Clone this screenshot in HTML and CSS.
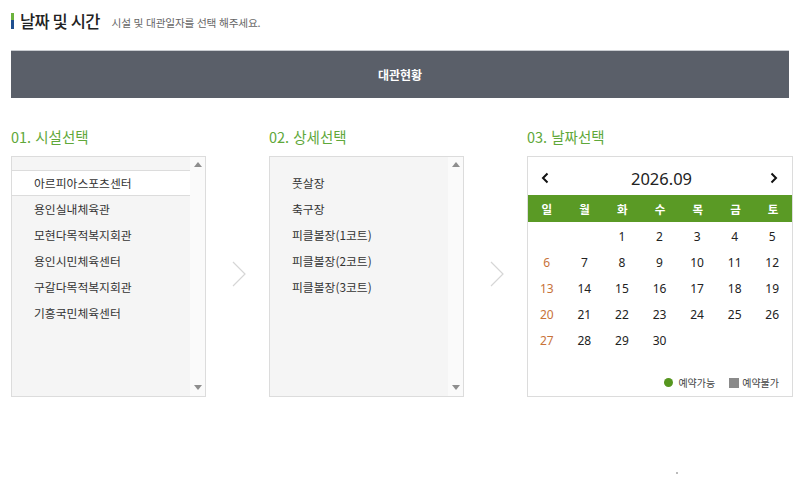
FILE: index.html
```html
<!DOCTYPE html>
<html lang="ko">
<head>
<meta charset="utf-8">
<title>날짜 및 시간</title>
<link rel="stylesheet" href="styles.css">
</head>
<body>
<div class="page">
  <div class="head">
    <span class="marker"></span>
    <h1 class="head-title">날짜 및 시간</h1>
    <span class="head-sub">시설 및 대관일자를 선택 해주세요.</span>
  </div>
  <div class="banner">대관현황</div>

  <div class="columns">
    <div class="col col-list">
      <h2 class="step">01. 시설선택</h2>
      <div class="listbox">
        <ul class="items">
          <li class="item selected">아르피아스포츠센터</li>
          <li class="item">용인실내체육관</li>
          <li class="item">모현다목적복지회관</li>
          <li class="item">용인시민체육센터</li>
          <li class="item">구갈다목적복지회관</li>
          <li class="item">기흥국민체육센터</li>
        </ul>
        <div class="scroll"><span class="tri up"></span><span class="tri down"></span></div>
      </div>
    </div>

    <div class="sep"><svg width="14" height="26" viewBox="0 0 14 26"><polyline points="1,1 13,13 1,25" fill="none" stroke="#d6d6d6" stroke-width="1.2"/></svg></div>

    <div class="col col-list">
      <h2 class="step">02. 상세선택</h2>
      <div class="listbox">
        <ul class="items">
          <li class="item">풋살장</li>
          <li class="item">축구장</li>
          <li class="item">피클볼장(1코트)</li>
          <li class="item">피클볼장(2코트)</li>
          <li class="item">피클볼장(3코트)</li>
        </ul>
        <div class="scroll"><span class="tri up"></span><span class="tri down"></span></div>
      </div>
    </div>

    <div class="sep"><svg width="14" height="26" viewBox="0 0 14 26"><polyline points="1,1 13,13 1,25" fill="none" stroke="#d6d6d6" stroke-width="1.2"/></svg></div>

    <div class="col col-cal">
      <h2 class="step">03. 날짜선택</h2>
      <div class="calendar">
        <div class="cal-nav">
          <svg class="nav-arrow" width="8" height="12" viewBox="0 0 8 12"><polyline points="6.5,1.5 2,6 6.5,10.5" fill="none" stroke="#111" stroke-width="2"/></svg>
          <span class="cal-month">2026.09</span>
          <svg class="nav-arrow" width="8" height="12" viewBox="0 0 8 12"><polyline points="1.5,1.5 6,6 1.5,10.5" fill="none" stroke="#111" stroke-width="2"/></svg>
        </div>
        <div class="weekdays">
          <span>일</span><span>월</span><span>화</span><span>수</span><span>목</span><span>금</span><span>토</span>
        </div>
        <div class="days">
          <span></span><span></span><span>1</span><span>2</span><span>3</span><span>4</span><span>5</span>
          <span class="sun">6</span><span>7</span><span>8</span><span>9</span><span>10</span><span>11</span><span>12</span>
          <span class="sun">13</span><span>14</span><span>15</span><span>16</span><span>17</span><span>18</span><span>19</span>
          <span class="sun">20</span><span>21</span><span>22</span><span>23</span><span>24</span><span>25</span><span>26</span>
          <span class="sun">27</span><span>28</span><span>29</span><span>30</span><span></span><span></span><span></span>
        </div>
        <div class="legend">
          <span class="lg lg-ok"><span class="dot"></span>예약가능</span>
          <span class="lg lg-no"><span class="sq"></span>예약불가</span>
        </div>
      </div>
    </div>
  </div>
  <div class="foot"><span class="speck"></span></div>
</div>
</body>
</html>
```

FILE: styles.css
```css
* { box-sizing: border-box; }
html, body { margin: 0; padding: 0; background: #fff; }
body {
  font-family: "Noto Sans", "Noto Sans CJK KR", sans-serif;
  color: #333;
  width: 800px;
  height: 480px;
  overflow: hidden;
}
.page { padding: 9px 0 0 11px; }

.head { display: flex; align-items: center; height: 24px; }
.marker {
  width: 3px; height: 16px;
  background: linear-gradient(#6cb33e 0 45%, #1f4f8f 45% 100%);
  margin-right: 6px;
}
.head-title {
  margin: 0; font-size: 16.5px; font-weight: 500; color: #222;
  font-family: "Noto Sans CJK KR", sans-serif; letter-spacing: -0.8px;
}
.head-sub {
  margin-left: 12px; font-size: 10.7px; color: #666; padding-top: 2px;
  font-family: "Noto Sans CJK KR", sans-serif; letter-spacing: -0.2px;
}

.banner {
  margin-top: 17px;
  width: 778px; height: 48px;
  border-top: 1px solid #c9ccd1;
  background: #5a5f69;
  color: #fff; font-size: 12px; font-weight: 700;
  font-family: "Noto Sans CJK KR", sans-serif;
  display: flex; align-items: center; justify-content: center;
}

.columns { display: flex; margin-top: 29px; }
.col { display: flex; flex-direction: column; }
.col-list { width: 195px; }
.col-cal { width: 266px; }
.step {
  margin: 0; height: 20px; line-height: 20px;
  font-size: 14.5px; font-weight: 400; color: #5fa83a;
  font-family: "Noto Sans CJK KR", sans-serif;
}
.sep {
  width: 63px; display: flex; justify-content: center; align-items: center;
  padding-top: 24px; padding-left: 2px;
}

.listbox {
  margin-top: 9px;
  height: 241px;
  border: 1px solid #dcdcdc;
  display: flex;
  background: #f5f5f5;
}
.items {
  list-style: none; margin: 0; padding: 13px 0 0 0;
  flex: 1;
}
.item {
  height: 26px; line-height: 26px;
  padding-left: 22px;
  font-size: 11.8px; color: #333;
  font-family: "Noto Sans CJK KR", sans-serif;
}
.item.selected {
  background: #fff;
  border-top: 1px solid #dcdcdc;
  border-bottom: 1px solid #dcdcdc;
  line-height: 24px;
}
.scroll {
  width: 15px; background: #fafafa;
  display: flex; flex-direction: column; justify-content: space-between; align-items: center;
  padding: 5px 0 6px;
}
.tri { width: 0; height: 0; border-left: 4.5px solid transparent; border-right: 4.5px solid transparent; }
.tri.up { border-bottom: 5px solid #8e8e8e; }
.tri.down { border-top: 5px solid #8e8e8e; }

.calendar {
  margin-top: 9px;
  height: 241px;
  border: 1px solid #dcdcdc;
  background: #fff;
  display: flex; flex-direction: column;
}
.cal-nav {
  height: 38px; display: flex; align-items: center; justify-content: space-between;
  padding: 4px 14px 0 13px;
}
.cal-month { font-size: 16.5px; color: #222; padding-left: 4px; }
.weekdays {
  height: 27px; background: #5a9a25;
  display: grid; grid-template-columns: repeat(7, 1fr);
  align-items: center; text-align: center;
  color: #fff; font-size: 11.5px; font-weight: 700;
  font-family: "Noto Sans CJK KR", sans-serif;
}
.days {
  display: grid; grid-template-columns: repeat(7, 1fr);
  grid-auto-rows: 26px; align-items: center; text-align: center;
  font-size: 12px; color: #222; padding-top: 1px; padding-right: 1px;
}
.days .sun { color: #c8733a; }
.legend {
  margin-top: auto; padding: 0 13px 6px 0;
  display: flex; justify-content: flex-end; gap: 14px;
  font-size: 10px; color: #444;
  font-family: "Noto Sans CJK KR", sans-serif;
}
.lg { display: flex; align-items: center; }
.lg-ok { gap: 5px; }
.lg-no { gap: 3px; }
.dot { width: 9px; height: 9px; border-radius: 50%; background: #56961f; }
.sq { width: 10px; height: 10px; background: #8a8a8a; }

.foot { position: relative; height: 80px; }
.speck { position: absolute; left: 665px; top: 75px; width: 2px; height: 2px; background: #bbb; }
```
